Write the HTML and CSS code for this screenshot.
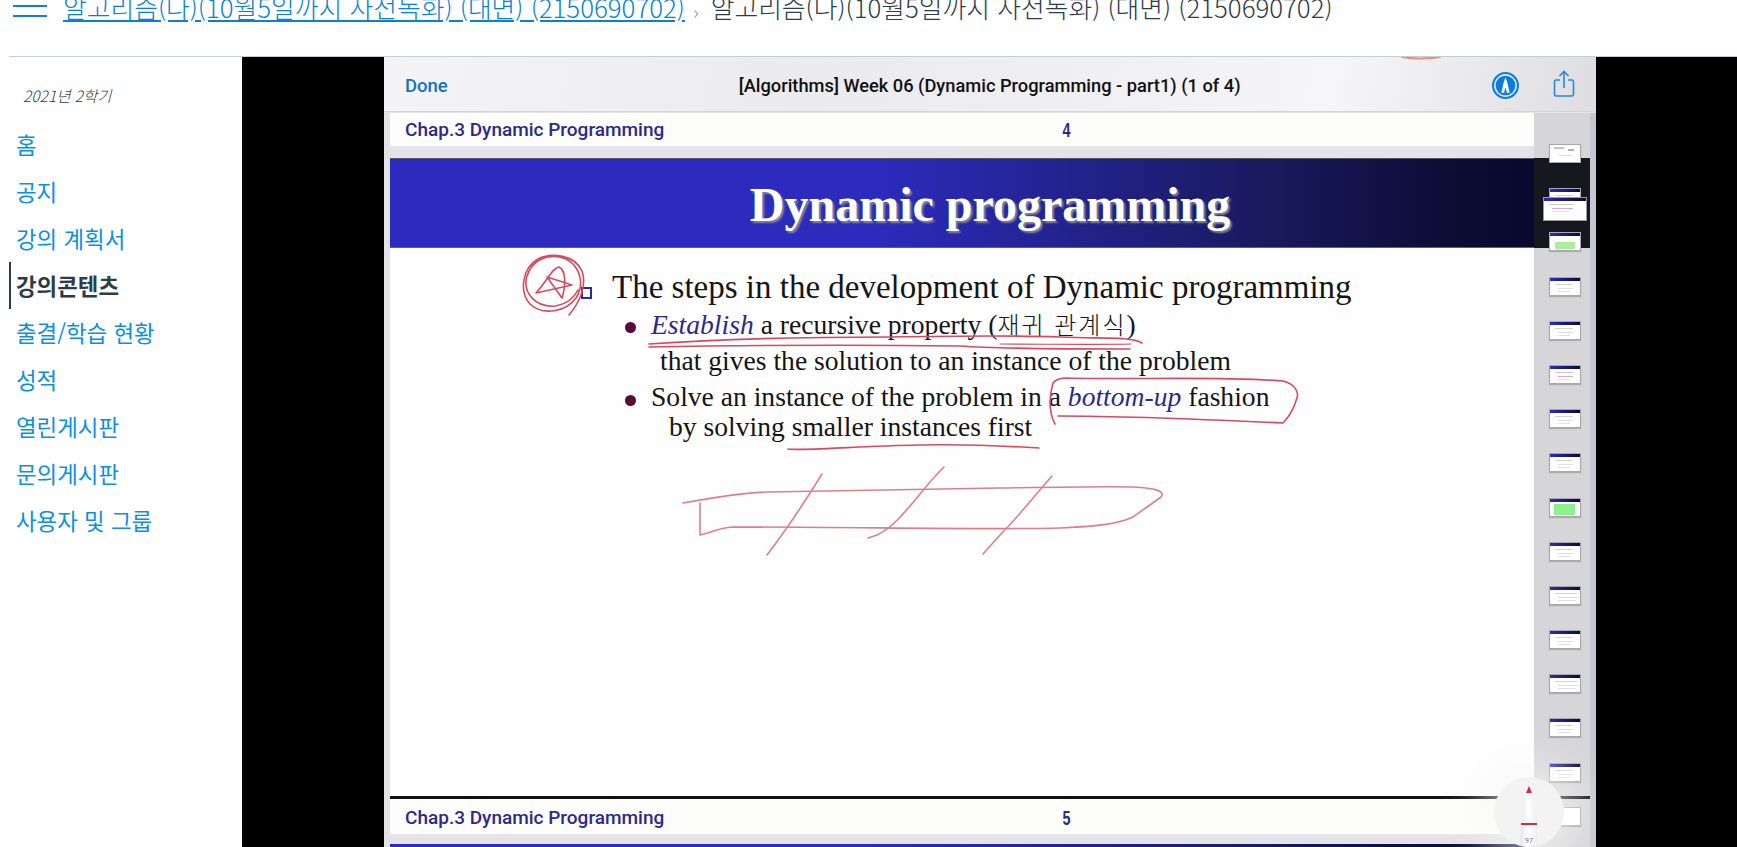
FILE: index.html
```html
<!DOCTYPE html>
<html lang="ko">
<head>
<meta charset="utf-8">
<title>알고리즘(나)</title>
<link rel="stylesheet" href="styles.css">
</head>
<body>
<header class="topnav">
  <button class="burger" aria-label="menu"><span></span><span></span></button>
  <a class="crumb-link" href="#">알고리즘(나)(10월5일까지 사전녹화) (대면) (2150690702)</a>
  <span class="crumb-sep">›</span>
  <span class="crumb-current">알고리즘(나)(10월5일까지 사전녹화) (대면) (2150690702)</span>
</header>
<div class="layout">
  <aside class="sidebar">
    <div class="term">2021년 2학기</div>
    <nav class="menu">
      <a href="#">홈</a>
      <a href="#">공지</a>
      <a href="#">강의 계획서</a>
      <a href="#" class="active">강의콘텐츠</a>
      <a href="#">출결/학습 현황</a>
      <a href="#">성적</a>
      <a href="#">열린게시판</a>
      <a href="#">문의게시판</a>
      <a href="#">사용자 및 그룹</a>
    </nav>
  </aside>
  <main class="video">
    <section class="screen">
      <div class="appbar">
        <span class="done">Done</span>
        <span class="doc-title">[Algorithms] Week 06 (Dynamic Programming - part1) (1 of 4)</span>
        <div class="app-icons">
          <svg class="ic-pen" viewBox="0 0 26 26" width="27" height="27">
            <circle cx="13" cy="13" r="12" fill="none" stroke="#0a7be0" stroke-width="2"/>
            <circle cx="13" cy="13" r="9.5" fill="#0a7be0"/>
            <path d="M13 5 L15 11 L17 20 H9 L11 11 Z" fill="#fff"/>
            <path d="M11.5 20 L13 15 L14.5 20 Z" fill="#0a7be0"/>
          </svg>
          <svg class="ic-share" viewBox="0 0 22 28" width="22" height="28">
            <path d="M7 10 H3 Q1.5 10 1.5 11.5 V24.5 Q1.5 26 3 26 H19 Q20.5 26 20.5 24.5 V11.5 Q20.5 10 19 10 H15" fill="none" stroke="#2a86e0" stroke-width="1.6"/>
            <path d="M11 18 V2 M6.5 6 L11 1.5 L15.5 6" fill="none" stroke="#2a86e0" stroke-width="1.6"/>
          </svg>
        </div>
      </div>
      <div class="pages">
        <div class="strip"><span class="chap">Chap.3 Dynamic Programming</span><span class="pg pg-4">4</span></div>
        <div class="band"><h1>Dynamic programming</h1></div>
        <div class="slide-body">
          <p class="lead"><span class="sq"></span>The steps in the development of Dynamic programming</p>
          <ul class="points">
            <li><em>Establish</em> a recursive property (<span class="ko">재귀 관계식</span>)
              <div class="cont cont-a">that gives the solution to an instance of the problem</div></li>
            <li>Solve an instance of the problem in a <em>bottom-up</em> fashion
              <div class="cont cont-b">by solving smaller instances first</div></li>
          </ul>
        </div>
        <div class="strip strip-b"><span class="chap">Chap.3 Dynamic Programming</span><span class="pg pg-5">5</span></div>
        <div class="band band-next"></div>
      </div>

      <svg class="ink" viewBox="384 57 1212 790" width="1212" height="790">
        <g fill="none" stroke="#d8485e" stroke-width="1.6" stroke-linecap="round" stroke-linejoin="round">
          <path d="M1402 57 Q1420 60 1440 57" stroke="#ee8a80" stroke-width="2"/>
          <path d="M569 315 C580 302 587 285 582 271 C575 255 552 252 538 259 C522 268 519 292 530 304 C543 316 566 312 576 298 C585 284 580 266 566 259 C550 253 533 258 527 276 C522 293 536 308 556 306 C566 304 574 298 578 290"/>
          <path d="M536 293 L572 285 L547 277 L562 298 C566 285 566 270 559 267 C552 268 548 280 536 293"/>
          <path d="M649 344 C720 339 800 337 890 337 C950 336 1010 335 1060 337 C1100 339 1130 336 1142 343"/>
          <path d="M649 347 C760 345 880 345 960 346 C1000 349 1070 349 1130 349"/>
          <path d="M1000 344 C1050 344 1100 345 1131 344" stroke-width="1.2"/>
          <path d="M788 449 C800 451 860 446 920 445 C980 444 1020 447 1039 448"/>
          <path d="M1055 424 C1050 415 1048 400 1053 383 C1056 379 1062 378 1067 378 C1130 380 1220 376 1283 381 C1295 384 1299 392 1297 398 C1294 408 1288 418 1283 423 C1240 421 1130 416 1058 416"/>
          <g stroke="#dc7f8d">
            <path d="M683 503 C710 498 740 493 767 492 C850 490 930 489 1000 488 C1060 487 1110 486 1133 487 C1155 488 1166 491 1161 497 C1150 505 1140 512 1133 517 C1118 524 1100 526 1060 528 C1000 530 850 527 733 527 C718 528 710 533 700 535 L700 503"/>
            <path d="M822 474 C806 500 790 525 767 555"/>
            <path d="M944 467 C920 490 900 525 877 535 L868 538"/>
            <path d="M1052 476 C1035 495 1020 515 1000 535 L983 554"/>
          </g>
        </g>
      </svg>

      <aside class="rail">
        <div class="rail-band"></div>
        <div class="rail-line"></div>
        <div class="thumbs">
          <div class="thumb t-first"></div>
          <div class="thumb t-lines"></div>
          <div class="thumb t-green"></div>
          <div class="thumb t-lines"></div>
          <div class="thumb t-lines"></div>
          <div class="thumb t-lines t-red"></div>
          <div class="thumb t-lines"></div>
          <div class="thumb t-lines"></div>
          <div class="thumb t-green t-bright"></div>
          <div class="thumb t-lines"></div>
          <div class="thumb t-lines t-dense"></div>
          <div class="thumb t-lines"></div>
          <div class="thumb t-lines t-dense"></div>
          <div class="thumb t-lines"></div>
          <div class="thumb t-lines"></div>
          <div class="thumb t-blank"></div>
        </div>
        <div class="thumb t-current t-lines t-red"></div>
      </aside>

      <div class="pencil">
        <svg viewBox="0 0 70 70" width="70" height="70">
          <defs>
            <linearGradient id="barrel" x1="0" x2="1" y1="0" y2="0">
              <stop offset="0" stop-color="#e4e4e4"/>
              <stop offset="0.45" stop-color="#ffffff"/>
              <stop offset="1" stop-color="#ececec"/>
            </linearGradient>
          </defs>
          <path d="M35 8 L28 35 L26 70 H44 L42 35 Z" fill="url(#barrel)"/>
          <path d="M35 9 L32 16 H38 Z" fill="#d9283c"/>
          <rect x="27" y="46" width="16" height="2" fill="#d9283c"/>
        </svg>
        <span class="pct">97</span>
      </div>
    </section>
  </main>
</div>
</body>
</html>
```
FILE: styles.css
```css
* { box-sizing: border-box; }
html, body { margin: 0; height: 847px; overflow: hidden; background: #fff; }
body { font-family: "Noto Sans CJK KR", "Noto Sans", sans-serif; }

.topnav {
  height: 57px;
  margin-left: 9px;
  border-bottom: 1px solid #c7cdd1;
  display: flex;
  align-items: flex-start;
  overflow: hidden;
  font-size: 25.8px;
  font-weight: 300;
  line-height: 28px;
  color: #2d3b45;
  white-space: nowrap;
}
.burger {
  width: 34px;
  margin: 5px 16px 0 4px;
  padding: 0;
  border: 0;
  background: none;
  display: flex;
  flex-direction: column;
  gap: 8px;
}
.burger span { height: 2px; background: #0a84d9; display: block; }
.crumb-link { color: #0a7fd6; text-decoration: underline; text-underline-offset: 2px; margin-top: -7px; }
.crumb-sep { color: #8b969e; font-size: 20px; margin: -2px 12px 0 8px; }
.crumb-current { margin-top: -7px; }

.layout { display: flex; height: 790px; }
.sidebar { width: 242px; flex: none; background: #fff; padding-left: 9px; }
.term { font-size: 15.5px; font-style: italic; font-weight: 300; color: #2d3b45; padding: 28px 0 0 14px; height: 64px; line-height: 20px; }
.menu { display: flex; flex-direction: column; }
.menu a {
  height: 47px;
  line-height: 47px;
  padding-left: 5px;
  font-size: 22.4px;
  color: #0a8fe6;
  text-decoration: none;
  border-left: 2px solid transparent;
}
.menu a.active { color: #2d3b45; font-weight: 700; border-left-color: #2d3b45; }

.video { flex: 1; background: #000; padding-left: 142px; padding-right: 141px; }
.screen { position: relative; height: 790px; background: #e4e4e8; overflow: hidden; }

.appbar {
  height: 55px;
  display: flex;
  align-items: center;
  padding: 3px 19px 0 21px;
  background: linear-gradient(100deg, #f4f3f5 0%, #ebeaed 35%, #f0eff1 60%, #f6f5f7 78%, #dedee0 100%);
  border-bottom: 1px solid #d5d5d8;
}
.done { color: #1272c6; font: 500 18.5px/20px Roboto, sans-serif; }
.doc-title { color: #111; font: 500 18.28px/20px Roboto, sans-serif; margin-left: 291px; flex: none; }
.app-icons { display: flex; align-items: center; gap: 34px; margin-left: auto; margin-right: 0; }
.ic-pen { margin-left: -4px; }
.ic-pen, .ic-share { display: block; }
.ic-share { margin-top: -3px; margin-right: 2px; }

.pages { margin-left: 6px; }
.strip {
  height: 33px;
  margin-top: 1px;
  background: #fdfdfb;
  display: flex;
  align-items: center;
  position: relative;
  padding-left: 15px;
}
.chap { color: #2b2a8c; font: 500 19px/20px Roboto, sans-serif; }
.pg {
  display: inline-block;
  color: #2b2a8c;
  font: 700 20px/20px "Liberation Sans", sans-serif;
  transform: scaleX(.72);
  margin-left: 397px;
}
.pg-5 { margin-left: 397px; }
.band {
  height: 90px;
  margin-top: 12px;
  background: linear-gradient(90deg, #2c2bbd 0%, #2c2bbd 40%, #1a1a60 72%, #0c0c35 88%, #06062a 100%);
  display: flex;
  align-items: center;
  justify-content: center;
  border-top: 1px solid #55555f;
  border-bottom: 1px solid #5b5b90;
}
.band h1 {
  margin: 3px 6px 0 0;
  color: #fff;
  font: 700 48px/50px "Liberation Serif", serif;
  text-shadow: 2px 2px 2px #8a8a9a;
}
.band-next { height: 4px; margin-top: 10px; border: 0; }

.slide-body {
  height: 551px;
  background: #fefefe;
  padding: 21px 0 0 222px;
  border-bottom: 3px solid #111;
  font-family: "Liberation Serif", "Noto Sans CJK KR", serif;
  color: #151515;
}
.lead { margin: 0; font-size: 33px; line-height: 36px; }
.sq {
  display: inline-block;
  width: 11px;
  height: 12px;
  border: 2px solid #2a28b0;
  margin-right: 20px;
  margin-left: -31px;
  vertical-align: -1px;
}
.points { list-style: none; margin: 0; padding: 0 0 0 39px; font-size: 27.6px; }
.points li { position: relative; line-height: 30px; padding-top: 3.5px; }
.points li + li { margin-top: 3px; }
.points li::before {
  content: "";
  position: absolute;
  left: -26px;
  top: 16.5px;
  width: 11px;
  height: 11px;
  border-radius: 50%;
  background: #5a0a3a;
}
.points em { color: #2b2a8c; }
.ko { font: 300 24px/30px "Noto Sans CJK KR", sans-serif; letter-spacing: 2px; }
.cont { line-height: 30px; }
.cont-a { margin-left: 9px; margin-top: 6px; }
.cont-b { margin-left: 18px; }
.strip-b { height: 35px; margin-top: 0; padding-top: 2px; }

.ink { position: absolute; left: 0; top: 0; pointer-events: none; }

.rail {
  position: absolute;
  right: 6px;
  top: 56px;
  bottom: 0;
  width: 56px;
  background: #d6d6d8;
  box-shadow: 6px 0 0 #c6c7d0;
}
.rail-band { position: absolute; left: 0; right: 0; top: 45px; height: 90px; background: #17171f; }
.rail-line { position: absolute; left: 0; right: 0; top: 683px; height: 3px; background: #111; }
.thumbs { position: absolute; left: 15px; top: 31px; display: flex; flex-direction: column; gap: 25.2px; }
.thumb {
  width: 32px;
  height: 19px;
  background-color: #fff;
  border: 1px solid #a9a9ad;
  position: relative;
  box-shadow: 0 1px 1px rgba(0,0,0,.2);
}
.thumb::before {
  content: "";
  position: absolute;
  left: 0;
  right: 0;
  top: 0;
  height: 3px;
  background: linear-gradient(90deg, #2c2bbd, #0a0a30);
}
.t-lines {
  background-image:
    linear-gradient(#d2d3de, #d2d3de),
    linear-gradient(#dfe0e6, #dfe0e6),
    linear-gradient(#dfe0e6, #dfe0e6);
  background-repeat: no-repeat;
  background-size: 60% 1px, 50% 1px, 40% 1px;
  background-position: 5px 6px, 8px 10px, 8px 13px;
}
.t-dense { background-size: 75% 1px, 70% 1px, 60% 1px; }
.t-red { background-image:
    linear-gradient(#c5c7d6, #c5c7d6),
    linear-gradient(#e6a8b0, #e6a8b0),
    linear-gradient(#dfe0e6, #dfe0e6); }
.t-first::before { display: none; }
.t-first {
  background-image: linear-gradient(#eeb0b8, #eeb0b8), linear-gradient(#b0b0bc, #b0b0bc), linear-gradient(#dcdce4, #dcdce4);
  background-repeat: no-repeat;
  background-size: 10px 2px, 6px 2px, 14px 1px;
  background-position: 4px 2px, 18px 4px, 9px 10px;
}
.t-green {
  background-image: linear-gradient(#b4e8a0, #a6f09a);
  background-repeat: no-repeat;
  background-size: 68% 7px;
  background-position: 5px 9px;
}
.t-bright { background-image: linear-gradient(#8df08c, #8df08c); background-size: 70% 11px; background-position: 4px 5px; }
.t-blank::before { display: none; }
.t-current {
  position: absolute;
  left: 9px;
  top: 84px;
  width: 44px;
  height: 24px;
  border: 1px solid #9a9a9e;
}

.pencil {
  position: absolute;
  left: 1110px;
  top: 720px;
  width: 70px;
  height: 70px;
  border-radius: 50%;
  background: #f3f3f3;
  box-shadow: 0 0 45px 12px rgba(255,255,255,.7), -8px -8px 40px rgba(0,0,0,.05);
  overflow: hidden;
}
.pencil svg { display: block; }
.pct {
  position: absolute;
  left: 0;
  right: 0;
  bottom: 1px;
  text-align: center;
  font: 400 7px/9px Roboto, sans-serif;
  color: #777;
}
```
